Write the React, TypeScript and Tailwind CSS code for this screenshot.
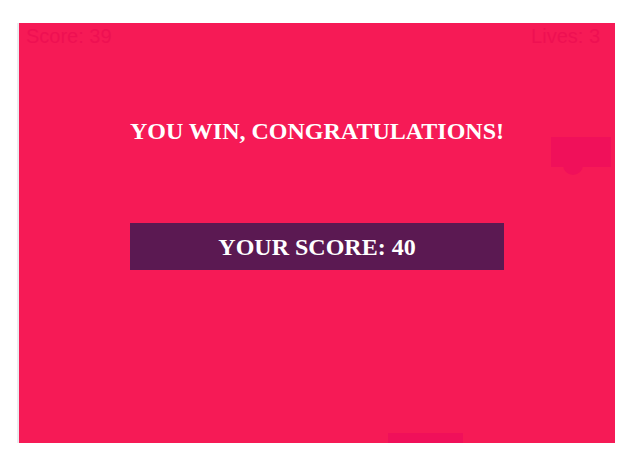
import { useState } from "react";

/// End-of-game screen: the board keeps its last frame (brick, ball, paddle)
/// and the win message plus final score sit on top of it.
export default function App() {
  const [score] = useState(39);
  const [lives] = useState(3);
  const finalScore = 40;

  return (
    <div className="min-h-screen bg-white pt-[23px] pl-[17px]">
      <div className="border-l-2 border-[#ebebef] w-[598px]">
        <div className="relative w-[596px] h-[420px] bg-[#f61a56] overflow-hidden">
          {/* hud */}
          <div className="flex justify-between px-[7px] pr-[15px] pt-[3px] text-[20px] leading-[20px] text-[#ee1052] font-['Liberation_Sans',Arial,sans-serif]">
            <span>Score: {score}</span>
            <span>Lives: {lives}</span>
          </div>

          {/* frozen game objects */}
          <div className="absolute left-[544px] top-[132px] w-[20px] h-[20px] rounded-full bg-[#f0105a]" />
          <div className="absolute left-[532px] top-[114px] w-[60px] h-[30px] bg-[#f0105a]" />
          <div className="absolute left-[369px] top-[410px] w-[75px] h-[10px] bg-[#f0105a]" />

          {/* message */}
          <div className="flex flex-col items-center mt-[73px] font-['Liberation_Serif','Times_New_Roman',serif] font-bold text-white">
            <h1 className="text-[24px] leading-[24px] whitespace-nowrap">YOU WIN, CONGRATULATIONS!</h1>
            <div className="mt-[80px] w-[374px] h-[47px] flex items-center justify-center bg-[#5b1952] text-[24px] leading-[24px]">
              YOUR SCORE: {finalScore}
            </div>
          </div>
        </div>
      </div>
    </div>
  );
}
